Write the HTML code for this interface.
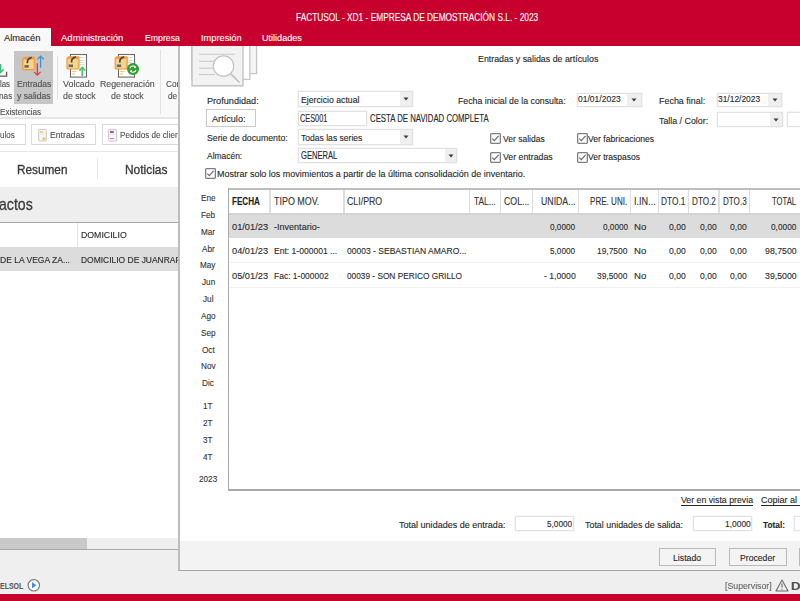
<!DOCTYPE html>
<html><head><meta charset="utf-8"><title>FACTUSOL</title><style>
html,body{margin:0;padding:0;}
body{width:800px;height:601px;position:relative;overflow:hidden;background:#fff;font-family:"Liberation Sans", sans-serif;}
.a{position:absolute;}
.t{position:absolute;white-space:nowrap;transform-origin:0 0;-webkit-text-stroke:0.12px currentColor;}

#w{position:absolute;left:0;top:0;width:800px;height:601px;overflow:hidden;filter:blur(0.3px);}
</style></head><body><div id="w">
<div class="a" style="left:0px;top:0px;width:800px;height:46.6px;background:#C8002D;"></div>
<span class="t" style="left:296.17px;top:12.75px;font-size:10px;line-height:10px;color:#FFFFFF;transform:scaleX(0.8327);">FACTUSOL - XD1 - EMPRESA DE DEMOSTRACIÓN S.L. - 2023</span>
<div class="a" style="left:0px;top:28px;width:51px;height:18px;background:#F8F8F8;"></div>
<span class="t" style="left:4.03px;top:33.00px;font-size:9.5px;line-height:9.5px;color:#262626;transform:scaleX(0.9832);">Almacén</span>
<span class="t" style="left:61.02px;top:33.00px;font-size:9.5px;line-height:9.5px;color:#FFFFFF;">Administración</span>
<span class="t" style="left:144.65px;top:33.00px;font-size:9.5px;line-height:9.5px;color:#FFFFFF;transform:scaleX(0.9180);">Empresa</span>
<span class="t" style="left:200.53px;top:33.00px;font-size:9.5px;line-height:9.5px;color:#FFFFFF;transform:scaleX(0.9742);">Impresión</span>
<span class="t" style="left:262.24px;top:33.00px;font-size:9.5px;line-height:9.5px;color:#FFFFFF;transform:scaleX(0.9546);">Utilidades</span>
<div class="a" style="left:0px;top:46px;width:178px;height:72px;background:#F9F9F9;"></div>
<div class="a" style="left:0px;top:116.9px;width:178px;height:1.7999999999999972px;background:#E6E6E6;"></div>
<div class="a" style="left:14px;top:51px;width:39px;height:52.5px;background:#C6C6C6;"></div>
<div class="a" style="left:56.5px;top:56px;width:1.0px;height:44px;background:#E1E1E1;"></div>
<div class="a" style="left:159.5px;top:50px;width:1.0px;height:64px;background:#E1E1E1;"></div>
<span class="t" style="left:-0.31px;top:79.75px;font-size:9px;line-height:9px;color:#505050;transform:scaleX(0.8707);">las</span>
<span class="t" style="left:-1.33px;top:91.75px;font-size:9px;line-height:9px;color:#505050;transform:scaleX(0.9133);">nas</span>
<span class="t" style="left:16.56px;top:79.75px;font-size:9px;line-height:9px;color:#505050;transform:scaleX(0.9544);">Entradas</span>
<span class="t" style="left:16.55px;top:91.75px;font-size:9px;line-height:9px;color:#505050;transform:scaleX(0.9622);">y salidas</span>
<span class="t" style="left:62.64px;top:79.75px;font-size:9px;line-height:9px;color:#505050;transform:scaleX(0.9901);">Volcado</span>
<span class="t" style="left:62.65px;top:91.75px;font-size:9px;line-height:9px;color:#505050;transform:scaleX(0.9753);">de stock</span>
<span class="t" style="left:99.65px;top:79.75px;font-size:9px;line-height:9px;color:#505050;transform:scaleX(0.9760);">Regeneración</span>
<span class="t" style="left:110.65px;top:91.75px;font-size:9px;line-height:9px;color:#505050;transform:scaleX(0.9753);">de stock</span>
<span class="t" style="left:165.67px;top:79.75px;font-size:9px;line-height:9px;color:#505050;transform:scaleX(0.9200);">Configuración</span>
<span class="t" style="left:167.67px;top:91.75px;font-size:9px;line-height:9px;color:#505050;transform:scaleX(0.9200);">de</span>
<span class="t" style="left:-0.33px;top:107.75px;font-size:9px;line-height:9px;color:#505050;transform:scaleX(0.9038);">Existencias</span>
<div class="a" style="left:0px;top:118.7px;width:178px;height:32.3px;background:#FFFFFF;"></div>
<div class="a" style="left:0px;top:150.5px;width:178px;height:1.0px;background:#E6E6E6;"></div>
<div class="a" style="left:-2px;top:124px;width:28px;height:21px;background:#FFFFFF;border:1px solid #DADADA;box-sizing:border-box;"></div>
<div class="a" style="left:31px;top:124px;width:65px;height:21px;background:#FFFFFF;border:1px solid #DADADA;box-sizing:border-box;"></div>
<div class="a" style="left:102px;top:124px;width:98px;height:21px;background:#FFFFFF;border:1px solid #DADADA;box-sizing:border-box;"></div>
<span class="t" style="left:-0.32px;top:130.75px;font-size:9px;line-height:9px;color:#505050;transform:scaleX(0.8863);">ulos</span>
<span class="t" style="left:49.65px;top:130.75px;font-size:9px;line-height:9px;color:#505050;transform:scaleX(0.9629);">Entradas</span>
<span class="t" style="left:120.28px;top:130.75px;font-size:9px;line-height:9px;color:#505050;transform:scaleX(0.9000);">Pedidos de clientes</span>
<div class="a" style="left:0px;top:151.5px;width:178px;height:35.0px;background:#FFFFFF;"></div>
<div class="a" style="left:96.5px;top:157.5px;width:1.0px;height:21.5px;background:#E6E6E6;"></div>
<span class="t" style="left:17.03px;top:163.25px;font-size:13px;line-height:13px;color:#3A3A3A;transform:scaleX(0.9066);-webkit-text-stroke:0.35px #3A3A3A;">Resumen</span>
<span class="t" style="left:124.52px;top:163.25px;font-size:13px;line-height:13px;color:#3A3A3A;transform:scaleX(0.9179);-webkit-text-stroke:0.35px #3A3A3A;">Noticias</span>
<div class="a" style="left:0px;top:186.5px;width:178px;height:35.5px;background:#EEEEEE;"></div>
<span class="t" style="left:-0.56px;top:196.25px;font-size:17px;line-height:17px;color:#3A3A3A;transform:scaleX(0.8299);-webkit-text-stroke:0.3px #3A3A3A;">actos</span>
<div class="a" style="left:0px;top:221.5px;width:178px;height:1.0px;background:#A8A8A8;"></div>
<div class="a" style="left:0px;top:222.5px;width:178px;height:24.0px;background:#FFFFFF;"></div>
<div class="a" style="left:77px;top:222.5px;width:1px;height:24.0px;background:#E3E3E3;"></div>
<span class="t" style="left:80.65px;top:230.75px;font-size:9px;line-height:9px;color:#2A2A2A;transform:scaleX(0.9720);">DOMICILIO</span>
<div class="a" style="left:0px;top:246.5px;width:178px;height:24.0px;background:#DCDCDC;"></div>
<span class="t" style="left:-0.34px;top:255.75px;font-size:9px;line-height:9px;color:#2A2A2A;transform:scaleX(0.9453);">DE LA VEGA ZA...</span>
<span class="t" style="left:80.66px;top:255.75px;font-size:9px;line-height:9px;color:#2A2A2A;transform:scaleX(0.9400);">DOMICILIO DE JUANRAFAEL</span>
<div class="a" style="left:0px;top:270.5px;width:178px;height:267.0px;background:#FFFFFF;"></div>
<div class="a" style="left:0px;top:537.5px;width:87px;height:11.100000000000023px;background:#C9C9C9;"></div>
<div class="a" style="left:87px;top:537.5px;width:91px;height:11.100000000000023px;background:#EEEEEE;"></div>
<div class="a" style="left:0px;top:548.6px;width:178px;height:1.3999999999999773px;background:#A8A8A8;"></div>
<div class="a" style="left:0px;top:550px;width:178px;height:44px;background:#EFEFEF;"></div>
<span class="t" style="left:-0.28px;top:581.75px;font-size:9px;line-height:9px;color:#5A5A5A;font-weight:700;transform:scaleX(0.7749);">ELSOL</span>
<svg class="a" style="left:0;top:50px" width="178" height="30" viewBox="0 50 178 30">
<path d="M0.3 64 V71.8" stroke="#3CBB6A" stroke-width="1.8"/>
<path d="M-3 69.2 L0.3 72.6 L3.7 69.2" fill="none" stroke="#3CBB6A" stroke-width="1.5"/>
<path d="M-1 76.1 H6.6 V71.8" fill="none" stroke="#5A5A5A" stroke-width="1.3"/>
<g transform="translate(22.2,56.8)"><path d="M0.6 2.2 L2.2 0.6 H12 L12.6 1.4 V12.1 L11.6 12.8 H1.2 L0.6 12 Z" fill="#F7D58E" stroke="#EE9A3C" stroke-width="1.2"/><path d="M0.8 2.6 H11.6 V12.4" fill="none" stroke="#F2B45A" stroke-width="0.9"/><rect x="0.8" y="0.8" width="11" height="1.8" fill="#F0A048"/><path d="M9.5 0.6 Q7 1.2 5.6 3.2 L5 6.3" fill="none" stroke="#3F4650" stroke-width="1.7"/><rect x="2.2" y="8.3" width="4.4" height="2.6" fill="#6E6A58"/></g>
<path d="M40.6 56.3 V67.8" stroke="#3F91D6" stroke-width="1.3"/>
<path d="M37.4 59.4 L40.6 56.2 L43.8 59.4" fill="none" stroke="#3F91D6" stroke-width="1.3"/>
<path d="M37.3 63.2 V75" stroke="#E1344A" stroke-width="1.3"/>
<path d="M34 71.9 L37.3 75.2 L40.6 71.9" fill="none" stroke="#E1344A" stroke-width="1.3"/>
<rect x="70.5" y="54.5" width="16" height="22.6" fill="#FFFFFF" stroke="#6A6A6A" stroke-width="1.1"/>
<g stroke="#D0D0D0" stroke-width="0.9"><line x1="79" y1="57.6" x2="84.5" y2="57.6"/><line x1="79" y1="60.4" x2="84.5" y2="60.4"/><line x1="79" y1="62.6" x2="84.5" y2="62.6"/><line x1="79" y1="64.6" x2="84.5" y2="64.6"/></g>
<g stroke="#F4B860" stroke-width="0.9"><line x1="72" y1="71.6" x2="76.5" y2="71.6"/><line x1="72" y1="74" x2="75" y2="74"/></g>
<g transform="translate(66.4,56.2)"><path d="M0.6 2.2 L2.2 0.6 H12 L12.6 1.4 V12.1 L11.6 12.8 H1.2 L0.6 12 Z" fill="#F7D58E" stroke="#EE9A3C" stroke-width="1.2"/><path d="M0.8 2.6 H11.6 V12.4" fill="none" stroke="#F2B45A" stroke-width="0.9"/><rect x="0.8" y="0.8" width="11" height="1.8" fill="#F0A048"/><path d="M9.5 0.6 Q7 1.2 5.6 3.2 L5 6.3" fill="none" stroke="#3F4650" stroke-width="1.7"/><rect x="2.2" y="8.3" width="4.4" height="2.6" fill="#6E6A58"/></g>
<path d="M82.3 67.6 V76" stroke="#4CC274" stroke-width="1.8"/>
<path d="M79.4 70.6 L82.3 67.5 L85.2 70.6" fill="none" stroke="#4CC274" stroke-width="1.7"/>
<rect x="118.5" y="54.5" width="16" height="22.6" fill="#FFFFFF" stroke="#6A6A6A" stroke-width="1.1"/>
<g stroke="#D0D0D0" stroke-width="0.9"><line x1="127" y1="57.6" x2="132.5" y2="57.6"/><line x1="127" y1="60.4" x2="132.5" y2="60.4"/><line x1="127" y1="62.6" x2="132" y2="62.6"/></g>
<g stroke="#F4B860" stroke-width="0.9"><line x1="120" y1="71.6" x2="124.5" y2="71.6"/><line x1="120" y1="74" x2="123" y2="74"/></g>
<g transform="translate(114.6,56.2)"><path d="M0.6 2.2 L2.2 0.6 H12 L12.6 1.4 V12.1 L11.6 12.8 H1.2 L0.6 12 Z" fill="#F7D58E" stroke="#EE9A3C" stroke-width="1.2"/><path d="M0.8 2.6 H11.6 V12.4" fill="none" stroke="#F2B45A" stroke-width="0.9"/><rect x="0.8" y="0.8" width="11" height="1.8" fill="#F0A048"/><path d="M9.5 0.6 Q7 1.2 5.6 3.2 L5 6.3" fill="none" stroke="#3F4650" stroke-width="1.7"/><rect x="2.2" y="8.3" width="4.4" height="2.6" fill="#6E6A58"/></g>
<circle cx="133" cy="69.1" r="6" fill="#2FA032"/>
<path d="M130 68.2 A3.2 3.2 0 0 1 135.6 67.2 M136 70 A3.2 3.2 0 0 1 130.4 71" fill="none" stroke="#FFFFFF" stroke-width="1.2"/>
<path d="M134.3 66.2 L136.2 67.8 L133.9 68.3 Z M131.7 72 L129.8 70.4 L132.1 69.9 Z" fill="#FFFFFF"/>
</svg>
<svg class="a" style="left:36px;top:127px" width="84" height="16" viewBox="36 127 84 16">
<rect x="38.7" y="129.4" width="7.6" height="11.6" rx="0.6" fill="#F6F6F6" stroke="#C9C9C9" stroke-width="1"/>
<rect x="40" y="131" width="2.8" height="1.8" fill="#F8C868"/>
<line x1="40" y1="134.2" x2="45" y2="134.2" stroke="#E6E6E6" stroke-width="0.8"/>
<rect x="42.6" y="137.6" width="2.6" height="2.4" fill="#F6C24E"/>
<rect x="108.6" y="129.3" width="8" height="11.8" rx="0.6" fill="#F6F6F6" stroke="#C9C9C9" stroke-width="1"/>
<rect x="110" y="131" width="3.8" height="2" fill="#C242B0"/>
<rect x="114" y="131" width="1.8" height="2" fill="#FFFFFF"/>
<line x1="110" y1="134.6" x2="115.5" y2="134.6" stroke="#E2E2E2" stroke-width="0.8"/>
<line x1="110" y1="138.6" x2="113.8" y2="138.6" stroke="#D070C8" stroke-width="1"/>
</svg>
<svg class="a" style="left:26px;top:578px" width="16" height="15" viewBox="26 578 16 15"><circle cx="33.8" cy="585.3" r="5.7" fill="#FFFFFF" stroke="#7A7A7A" stroke-width="1.2"/><path d="M32 582.3 L36.6 585.3 L32 588.3 Z" fill="#3C8FD8"/></svg>
<div class="a" style="left:178px;top:571px;width:622px;height:23px;background:#EFEFEF;"></div>
<div class="a" style="left:0px;top:593.7px;width:800px;height:7.2999999999999545px;background:#C8002D;"></div>
<div class="a" style="left:178px;top:46px;width:1.6999999999999886px;height:525px;background:#BDBDBD;"></div>
<div class="a" style="left:179.7px;top:46px;width:620.3px;height:495px;background:#FFFFFF;"></div>
<div class="a" style="left:180px;top:541px;width:620px;height:29.299999999999955px;background:#F3F3F3;"></div>
<div class="a" style="left:178px;top:570.3px;width:622px;height:1.0px;background:#A4A4A4;"></div>
<span class="t" style="left:477.65px;top:54.00px;font-size:9.5px;line-height:9.5px;color:#262626;transform:scaleX(0.9299);">Entradas y salidas de artículos</span>
<span class="t" style="left:206.64px;top:96.00px;font-size:9.5px;line-height:9.5px;color:#262626;transform:scaleX(0.9602);">Profundidad:</span>
<span class="t" style="left:206.65px;top:133.00px;font-size:9.5px;line-height:9.5px;color:#262626;transform:scaleX(0.9205);">Serie de documento:</span>
<span class="t" style="left:206.66px;top:151.00px;font-size:9.5px;line-height:9.5px;color:#262626;transform:scaleX(0.8880);">Almacén:</span>
<span class="t" style="left:217.14px;top:169.00px;font-size:9.5px;line-height:9.5px;color:#262626;transform:scaleX(0.9445);">Mostrar solo los movimientos a partir de la última consolidación de inventario.</span>
<span class="t" style="left:457.55px;top:96.00px;font-size:9.5px;line-height:9.5px;color:#262626;transform:scaleX(0.9219);">Fecha inicial de la consulta:</span>
<span class="t" style="left:658.64px;top:96.00px;font-size:9.5px;line-height:9.5px;color:#262626;transform:scaleX(0.9408);">Fecha final:</span>
<span class="t" style="left:658.65px;top:116.00px;font-size:9.5px;line-height:9.5px;color:#262626;transform:scaleX(0.9298);">Talla / Color:</span>
<span class="t" style="left:370.29px;top:113.75px;font-size:10px;line-height:10px;color:#262626;transform:scaleX(0.7797);">CESTA DE NAVIDAD COMPLETA</span>
<span class="t" style="left:502.66px;top:134.00px;font-size:9.5px;line-height:9.5px;color:#262626;transform:scaleX(0.8967);">Ver salidas</span>
<span class="t" style="left:588.26px;top:134.00px;font-size:9.5px;line-height:9.5px;color:#262626;transform:scaleX(0.9069);">Ver fabricaciones</span>
<span class="t" style="left:502.65px;top:152.00px;font-size:9.5px;line-height:9.5px;color:#262626;transform:scaleX(0.9225);">Ver entradas</span>
<span class="t" style="left:588.26px;top:152.00px;font-size:9.5px;line-height:9.5px;color:#262626;transform:scaleX(0.8965);">Ver traspasos</span>
<svg class="a" style="left:185px;top:46px" width="80" height="48" viewBox="185 46 80 48">
<path d="M192 40 V73.7 H256.6 V40" fill="#F5F5F5" stroke="#C6C6C6" stroke-width="1.3"/>
<path d="M192 40 V79.3 H249.8 V40" fill="#FFFFFF" stroke="#C6C6C6" stroke-width="1.3"/>
<path d="M192 40 V85.8 H243 V40" fill="#F2F2F2" stroke="#C2C2C2" stroke-width="1.4"/>
<g stroke="#CACACA" stroke-width="1.1">
<line x1="199" y1="54.3" x2="235" y2="54.3"/>
<line x1="199" y1="61.3" x2="214" y2="61.3"/>
<line x1="199" y1="68.2" x2="213" y2="68.2"/>
<line x1="199" y1="74.5" x2="215" y2="74.5"/>
</g>
<circle cx="223.5" cy="66" r="10.2" fill="#FFFFFF" stroke="#C4C4C4" stroke-width="1.2"/>
<line x1="231" y1="74" x2="239.5" y2="82.5" stroke="#B8B8B8" stroke-width="1.4"/>
</svg>
<div class="a" style="left:298px;top:91.3px;width:114.60000000000002px;height:15.700000000000003px;background:#FFFFFF;border:1px solid #E2E2E2;box-sizing:border-box;box-shadow:0 0 0 0.5px #EFEFEF;"></div>
<div class="a" style="left:399.5px;top:92.3px;width:12.100000000000023px;height:13.700000000000003px;background:#EFEFEF;"></div>
<svg class="a" style="left:403.1px;top:97.2px" width="6" height="4" viewBox="0 0 6 4"><path d="M0.5 0.5 H5.5 L3 3.5Z" fill="#3A3A3A"/></svg>
<span class="t" style="left:300.95px;top:95.00px;font-size:9.5px;line-height:9.5px;color:#262626;transform:scaleX(0.9140);">Ejercicio actual</span>
<div class="a" style="left:298px;top:111px;width:68.5px;height:14.5px;background:#FFFFFF;border:1px solid #E2E2E2;box-sizing:border-box;box-shadow:0 0 0 0.5px #EFEFEF;"></div>
<span class="t" style="left:300.01px;top:113.75px;font-size:10px;line-height:10px;color:#262626;transform:scaleX(0.7325);">CES001</span>
<div class="a" style="left:298px;top:129.2px;width:114.60000000000002px;height:15.800000000000011px;background:#FFFFFF;border:1px solid #E2E2E2;box-sizing:border-box;box-shadow:0 0 0 0.5px #EFEFEF;"></div>
<div class="a" style="left:399.5px;top:130.2px;width:12.100000000000023px;height:13.800000000000011px;background:#EFEFEF;"></div>
<svg class="a" style="left:403.1px;top:135.1px" width="6" height="4" viewBox="0 0 6 4"><path d="M0.5 0.5 H5.5 L3 3.5Z" fill="#3A3A3A"/></svg>
<span class="t" style="left:300.96px;top:133.00px;font-size:9.5px;line-height:9.5px;color:#262626;transform:scaleX(0.9011);">Todas las series</span>
<div class="a" style="left:298px;top:147.6px;width:159px;height:15.900000000000006px;background:#FFFFFF;border:1px solid #E2E2E2;box-sizing:border-box;box-shadow:0 0 0 0.5px #EFEFEF;"></div>
<div class="a" style="left:445px;top:148.6px;width:11px;height:13.900000000000006px;background:#EFEFEF;"></div>
<svg class="a" style="left:448.0px;top:153.6px" width="6" height="4" viewBox="0 0 6 4"><path d="M0.5 0.5 H5.5 L3 3.5Z" fill="#3A3A3A"/></svg>
<span class="t" style="left:301.00px;top:150.75px;font-size:10px;line-height:10px;color:#262626;transform:scaleX(0.7596);">GENERAL</span>
<div class="a" style="left:206.4px;top:109.2px;width:49.19999999999999px;height:17.39999999999999px;background:#FFFFFF;border:1px solid #C9C9C9;box-sizing:border-box;"></div>
<span class="t" style="left:212.43px;top:114.00px;font-size:9.5px;line-height:9.5px;color:#262626;transform:scaleX(0.9619);">Artículo:</span>
<svg class="a" style="left:205px;top:168.3px" width="11" height="11" viewBox="0 0 11 11"><rect x="0.65" y="0.65" width="9.7" height="9.7" rx="0.8" fill="#FFFFFF" stroke="#7F7F7F" stroke-width="1.3"/><path d="M2.3 5.6 L4.3 7.6 L8.6 2.8" fill="none" stroke="#6A6A6A" stroke-width="1.2"/></svg>
<svg class="a" style="left:490.3px;top:133.3px" width="11" height="11" viewBox="0 0 11 11"><rect x="0.65" y="0.65" width="9.7" height="9.7" rx="0.8" fill="#FFFFFF" stroke="#7F7F7F" stroke-width="1.3"/><path d="M2.3 5.6 L4.3 7.6 L8.6 2.8" fill="none" stroke="#6A6A6A" stroke-width="1.2"/></svg>
<svg class="a" style="left:490.3px;top:152px" width="11" height="11" viewBox="0 0 11 11"><rect x="0.65" y="0.65" width="9.7" height="9.7" rx="0.8" fill="#FFFFFF" stroke="#7F7F7F" stroke-width="1.3"/><path d="M2.3 5.6 L4.3 7.6 L8.6 2.8" fill="none" stroke="#6A6A6A" stroke-width="1.2"/></svg>
<svg class="a" style="left:576.5px;top:133.3px" width="11" height="11" viewBox="0 0 11 11"><rect x="0.65" y="0.65" width="9.7" height="9.7" rx="0.8" fill="#FFFFFF" stroke="#7F7F7F" stroke-width="1.3"/><path d="M2.3 5.6 L4.3 7.6 L8.6 2.8" fill="none" stroke="#6A6A6A" stroke-width="1.2"/></svg>
<svg class="a" style="left:576.5px;top:152px" width="11" height="11" viewBox="0 0 11 11"><rect x="0.65" y="0.65" width="9.7" height="9.7" rx="0.8" fill="#FFFFFF" stroke="#7F7F7F" stroke-width="1.3"/><path d="M2.3 5.6 L4.3 7.6 L8.6 2.8" fill="none" stroke="#6A6A6A" stroke-width="1.2"/></svg>
<div class="a" style="left:576.5px;top:92.5px;width:65.0px;height:14.799999999999997px;background:#FFFFFF;border:1px solid #E2E2E2;box-sizing:border-box;box-shadow:0 0 0 0.5px #EFEFEF;"></div>
<div class="a" style="left:627px;top:93.5px;width:13.5px;height:12.799999999999997px;background:#EFEFEF;"></div>
<svg class="a" style="left:631.2px;top:97.9px" width="6" height="4" viewBox="0 0 6 4"><path d="M0.5 0.5 H5.5 L3 3.5Z" fill="#3A3A3A"/></svg>
<span class="t" style="left:577.66px;top:94.00px;font-size:9.5px;line-height:9.5px;color:#262626;transform:scaleX(0.8977);">01/01/2023</span>
<div class="a" style="left:716.6px;top:92.5px;width:65.39999999999998px;height:14.799999999999997px;background:#FFFFFF;border:1px solid #E2E2E2;box-sizing:border-box;box-shadow:0 0 0 0.5px #EFEFEF;"></div>
<div class="a" style="left:768px;top:93.5px;width:13px;height:12.799999999999997px;background:#EFEFEF;"></div>
<svg class="a" style="left:772.0px;top:97.9px" width="6" height="4" viewBox="0 0 6 4"><path d="M0.5 0.5 H5.5 L3 3.5Z" fill="#3A3A3A"/></svg>
<span class="t" style="left:718.16px;top:94.00px;font-size:9.5px;line-height:9.5px;color:#262626;transform:scaleX(0.8870);">31/12/2023</span>
<div class="a" style="left:716.6px;top:111.7px;width:66.0px;height:15.799999999999997px;background:#FFFFFF;border:1px solid #E2E2E2;box-sizing:border-box;box-shadow:0 0 0 0.5px #EFEFEF;"></div>
<div class="a" style="left:769.7px;top:112.7px;width:11.899999999999977px;height:13.799999999999997px;background:#EFEFEF;"></div>
<svg class="a" style="left:773.2px;top:117.6px" width="6" height="4" viewBox="0 0 6 4"><path d="M0.5 0.5 H5.5 L3 3.5Z" fill="#3A3A3A"/></svg>
<div class="a" style="left:787px;top:111.7px;width:43px;height:15.799999999999997px;background:#FFFFFF;border:1px solid #E2E2E2;box-sizing:border-box;box-shadow:0 0 0 0.5px #EFEFEF;"></div>
<div class="a" style="left:228.3px;top:188.2px;width:601.7px;height:302.40000000000003px;background:#FFFFFF;"></div>
<div class="a" style="left:228.3px;top:188.2px;width:601.7px;height:1.6000000000000227px;background:#BDBDBD;"></div>
<div class="a" style="left:228.3px;top:188.2px;width:1.1999999999999886px;height:302.40000000000003px;background:#A9A9A9;"></div>
<div class="a" style="left:228.3px;top:489.3px;width:601.7px;height:1.3000000000000114px;background:#A9A9A9;"></div>
<div class="a" style="left:229.3px;top:213px;width:600.7px;height:25px;background:#DCDCDC;"></div>
<div class="a" style="left:229.3px;top:213px;width:600.7px;height:1.5px;background:#D3D3D3;"></div>
<div class="a" style="left:229.6px;top:262.2px;width:600.4px;height:1.0px;background:#EFEFEF;"></div>
<div class="a" style="left:229.6px;top:287px;width:600.4px;height:1px;background:#EFEFEF;"></div>
<div class="a" style="left:269.4px;top:189.8px;width:1.400000000000034px;height:23.19999999999999px;background:#DEDEDE;"></div>
<div class="a" style="left:343.2px;top:189.8px;width:1.400000000000034px;height:23.19999999999999px;background:#DEDEDE;"></div>
<div class="a" style="left:468.9px;top:189.8px;width:1.400000000000034px;height:23.19999999999999px;background:#DEDEDE;"></div>
<div class="a" style="left:499.9px;top:189.8px;width:1.400000000000034px;height:23.19999999999999px;background:#DEDEDE;"></div>
<div class="a" style="left:531.9px;top:189.8px;width:1.3999999999999773px;height:23.19999999999999px;background:#DEDEDE;"></div>
<div class="a" style="left:578.0px;top:189.8px;width:1.3999999999999773px;height:23.19999999999999px;background:#DEDEDE;"></div>
<div class="a" style="left:629.6px;top:189.8px;width:1.3999999999999773px;height:23.19999999999999px;background:#DEDEDE;"></div>
<div class="a" style="left:657.6999999999999px;top:189.8px;width:1.3999999999999773px;height:23.19999999999999px;background:#DEDEDE;"></div>
<div class="a" style="left:688.0px;top:189.8px;width:1.3999999999999773px;height:23.19999999999999px;background:#DEDEDE;"></div>
<div class="a" style="left:718.4px;top:189.8px;width:1.3999999999999773px;height:23.19999999999999px;background:#DEDEDE;"></div>
<div class="a" style="left:748.8px;top:189.8px;width:1.3999999999999773px;height:23.19999999999999px;background:#DEDEDE;"></div>
<span class="t" style="left:231.68px;top:196.75px;font-size:10px;line-height:10px;color:#1E1E1E;font-weight:700;transform:scaleX(0.8112);">FECHA</span>
<span class="t" style="left:273.64px;top:196.75px;font-size:10px;line-height:10px;color:#333333;transform:scaleX(0.8926);">TIPO MOV.</span>
<span class="t" style="left:346.85px;top:196.75px;font-size:10px;line-height:10px;color:#333333;transform:scaleX(0.8798);">CLI/PRO</span>
<span class="t" style="left:473.67px;top:196.75px;font-size:10px;line-height:10px;color:#333333;transform:scaleX(0.8354);">TAL...</span>
<span class="t" style="left:503.65px;top:196.75px;font-size:10px;line-height:10px;color:#333333;transform:scaleX(0.8753);">COL...</span>
<span class="t" style="left:540.65px;top:196.75px;font-size:10px;line-height:10px;color:#333333;transform:scaleX(0.8744);">UNIDA...</span>
<span class="t" style="left:589.68px;top:196.75px;font-size:10px;line-height:10px;color:#333333;transform:scaleX(0.8075);">PRE. UNI.</span>
<span class="t" style="left:633.64px;top:196.75px;font-size:10px;line-height:10px;color:#333333;transform:scaleX(0.9088);">I.IN...</span>
<span class="t" style="left:661.27px;top:196.75px;font-size:10px;line-height:10px;color:#333333;transform:scaleX(0.8321);">DTO.1</span>
<span class="t" style="left:692.17px;top:196.75px;font-size:10px;line-height:10px;color:#333333;transform:scaleX(0.8146);">DTO.2</span>
<span class="t" style="left:722.68px;top:196.75px;font-size:10px;line-height:10px;color:#333333;transform:scaleX(0.8075);">DTO.3</span>
<span class="t" style="left:771.69px;top:196.75px;font-size:10px;line-height:10px;color:#333333;transform:scaleX(0.7702);">TOTAL</span>
<span class="t" style="left:231.63px;top:222.00px;font-size:9.5px;line-height:9.5px;color:#2A2A2A;transform:scaleX(0.9745);">01/01/23</span>
<span class="t" style="left:273.64px;top:222.00px;font-size:9.5px;line-height:9.5px;color:#2A2A2A;transform:scaleX(0.9513);">-Inventario-</span>
<span class="t" style="left:550.47px;top:222.00px;font-size:9.5px;line-height:9.5px;color:#2A2A2A;transform:scaleX(0.8656);">0,0000</span>
<span class="t" style="left:602.67px;top:222.00px;font-size:9.5px;line-height:9.5px;color:#2A2A2A;transform:scaleX(0.8656);">0,0000</span>
<span class="t" style="left:633.62px;top:222.00px;font-size:9.5px;line-height:9.5px;color:#2A2A2A;transform:scaleX(1.0091);">No</span>
<span class="t" style="left:669.36px;top:222.00px;font-size:9.5px;line-height:9.5px;color:#2A2A2A;transform:scaleX(0.9019);">0,00</span>
<span class="t" style="left:699.66px;top:222.00px;font-size:9.5px;line-height:9.5px;color:#2A2A2A;transform:scaleX(0.9019);">0,00</span>
<span class="t" style="left:729.86px;top:222.00px;font-size:9.5px;line-height:9.5px;color:#2A2A2A;transform:scaleX(0.9019);">0,00</span>
<span class="t" style="left:771.27px;top:222.00px;font-size:9.5px;line-height:9.5px;color:#2A2A2A;transform:scaleX(0.8727);">0,0000</span>
<span class="t" style="left:231.63px;top:246.00px;font-size:9.5px;line-height:9.5px;color:#2A2A2A;transform:scaleX(0.9745);">04/01/23</span>
<span class="t" style="left:273.66px;top:246.00px;font-size:9.5px;line-height:9.5px;color:#2A2A2A;transform:scaleX(0.8994);">Ent: 1-000001 ...</span>
<span class="t" style="left:346.86px;top:246.00px;font-size:9.5px;line-height:9.5px;color:#2A2A2A;transform:scaleX(0.8979);">00003 - SEBASTIAN AMARO...</span>
<span class="t" style="left:550.47px;top:246.00px;font-size:9.5px;line-height:9.5px;color:#2A2A2A;transform:scaleX(0.8656);">5,0000</span>
<span class="t" style="left:597.46px;top:246.00px;font-size:9.5px;line-height:9.5px;color:#2A2A2A;transform:scaleX(0.8844);">19,7500</span>
<span class="t" style="left:633.62px;top:246.00px;font-size:9.5px;line-height:9.5px;color:#2A2A2A;transform:scaleX(1.0091);">No</span>
<span class="t" style="left:669.36px;top:246.00px;font-size:9.5px;line-height:9.5px;color:#2A2A2A;transform:scaleX(0.9019);">0,00</span>
<span class="t" style="left:699.66px;top:246.00px;font-size:9.5px;line-height:9.5px;color:#2A2A2A;transform:scaleX(0.9019);">0,00</span>
<span class="t" style="left:729.86px;top:246.00px;font-size:9.5px;line-height:9.5px;color:#2A2A2A;transform:scaleX(0.9019);">0,00</span>
<span class="t" style="left:764.95px;top:246.00px;font-size:9.5px;line-height:9.5px;color:#2A2A2A;transform:scaleX(0.9231);">98,7500</span>
<span class="t" style="left:231.63px;top:271.00px;font-size:9.5px;line-height:9.5px;color:#2A2A2A;transform:scaleX(0.9745);">05/01/23</span>
<span class="t" style="left:273.66px;top:271.00px;font-size:9.5px;line-height:9.5px;color:#2A2A2A;transform:scaleX(0.8925);">Fac: 1-000002</span>
<span class="t" style="left:346.87px;top:271.00px;font-size:9.5px;line-height:9.5px;color:#2A2A2A;transform:scaleX(0.8717);">00039 - SON PERICO GRILLO</span>
<span class="t" style="left:543.95px;top:271.00px;font-size:9.5px;line-height:9.5px;color:#2A2A2A;transform:scaleX(0.9087);">- 1,0000</span>
<span class="t" style="left:597.46px;top:271.00px;font-size:9.5px;line-height:9.5px;color:#2A2A2A;transform:scaleX(0.8844);">39,5000</span>
<span class="t" style="left:633.62px;top:271.00px;font-size:9.5px;line-height:9.5px;color:#2A2A2A;transform:scaleX(1.0091);">No</span>
<span class="t" style="left:669.36px;top:271.00px;font-size:9.5px;line-height:9.5px;color:#2A2A2A;transform:scaleX(0.9019);">0,00</span>
<span class="t" style="left:699.66px;top:271.00px;font-size:9.5px;line-height:9.5px;color:#2A2A2A;transform:scaleX(0.9019);">0,00</span>
<span class="t" style="left:729.86px;top:271.00px;font-size:9.5px;line-height:9.5px;color:#2A2A2A;transform:scaleX(0.9019);">0,00</span>
<span class="t" style="left:764.95px;top:271.00px;font-size:9.5px;line-height:9.5px;color:#2A2A2A;transform:scaleX(0.9231);">39,5000</span>
<span class="t" style="left:200.93px;top:193.00px;font-size:9.5px;line-height:9.5px;color:#333333;transform:scaleX(0.8600);">Ene</span>
<span class="t" style="left:201.16px;top:210.00px;font-size:9.5px;line-height:9.5px;color:#333333;transform:scaleX(0.8600);">Feb</span>
<span class="t" style="left:201.16px;top:227.00px;font-size:9.5px;line-height:9.5px;color:#333333;transform:scaleX(0.8600);">Mar</span>
<span class="t" style="left:201.84px;top:244.00px;font-size:9.5px;line-height:9.5px;color:#333333;transform:scaleX(0.8600);">Abr</span>
<span class="t" style="left:200.48px;top:260.00px;font-size:9.5px;line-height:9.5px;color:#333333;transform:scaleX(0.8600);">May</span>
<span class="t" style="left:201.61px;top:277.00px;font-size:9.5px;line-height:9.5px;color:#333333;transform:scaleX(0.8600);">Jun</span>
<span class="t" style="left:202.97px;top:294.00px;font-size:9.5px;line-height:9.5px;color:#333333;transform:scaleX(0.8600);">Jul</span>
<span class="t" style="left:200.93px;top:311.00px;font-size:9.5px;line-height:9.5px;color:#333333;transform:scaleX(0.8600);">Ago</span>
<span class="t" style="left:200.93px;top:328.00px;font-size:9.5px;line-height:9.5px;color:#333333;transform:scaleX(0.8600);">Sep</span>
<span class="t" style="left:201.84px;top:345.00px;font-size:9.5px;line-height:9.5px;color:#333333;transform:scaleX(0.8600);">Oct</span>
<span class="t" style="left:200.93px;top:361.00px;font-size:9.5px;line-height:9.5px;color:#333333;transform:scaleX(0.8600);">Nov</span>
<span class="t" style="left:202.29px;top:378.00px;font-size:9.5px;line-height:9.5px;color:#333333;transform:scaleX(0.8600);">Dic</span>
<span class="t" style="left:203.43px;top:401.00px;font-size:9.5px;line-height:9.5px;color:#333333;transform:scaleX(0.8600);">1T</span>
<span class="t" style="left:203.43px;top:418.00px;font-size:9.5px;line-height:9.5px;color:#333333;transform:scaleX(0.8600);">2T</span>
<span class="t" style="left:203.43px;top:435.00px;font-size:9.5px;line-height:9.5px;color:#333333;transform:scaleX(0.8600);">3T</span>
<span class="t" style="left:203.43px;top:452.00px;font-size:9.5px;line-height:9.5px;color:#333333;transform:scaleX(0.8600);">4T</span>
<span class="t" style="left:199.11px;top:474.00px;font-size:9.5px;line-height:9.5px;color:#333333;transform:scaleX(0.8600);">2023</span>
<span class="t" style="left:681.25px;top:495.00px;font-size:9.5px;line-height:9.5px;color:#262626;transform:scaleX(0.9212);text-decoration:underline;text-underline-offset:2px;">Ver en vista previa</span>
<span class="t" style="left:761.44px;top:495.00px;font-size:9.5px;line-height:9.5px;color:#262626;transform:scaleX(0.9500);text-decoration:underline;text-underline-offset:2px;">Copiar al portapapeles</span>
<span class="t" style="left:398.94px;top:520.00px;font-size:9.5px;line-height:9.5px;color:#262626;transform:scaleX(0.9503);">Total unidades de entrada:</span>
<div class="a" style="left:514.8px;top:516px;width:59.10000000000002px;height:14.600000000000023px;background:#FFFFFF;border:1px solid #E2E2E2;box-sizing:border-box;box-shadow:0 0 0 0.5px #EFEFEF;"></div>
<span class="t" style="left:547.47px;top:519.00px;font-size:9.5px;line-height:9.5px;color:#262626;transform:scaleX(0.8656);">5,0000</span>
<span class="t" style="left:585.44px;top:520.00px;font-size:9.5px;line-height:9.5px;color:#262626;transform:scaleX(0.9363);">Total unidades de salida:</span>
<div class="a" style="left:692.8px;top:516px;width:58.90000000000009px;height:14.600000000000023px;background:#FFFFFF;border:1px solid #E2E2E2;box-sizing:border-box;box-shadow:0 0 0 0.5px #EFEFEF;"></div>
<span class="t" style="left:724.96px;top:519.00px;font-size:9.5px;line-height:9.5px;color:#262626;transform:scaleX(0.8868);">1,0000</span>
<span class="t" style="left:762.57px;top:520.00px;font-size:9.5px;line-height:9.5px;color:#262626;font-weight:700;transform:scaleX(0.8731);">Total:</span>
<div class="a" style="left:793.7px;top:516px;width:36.299999999999955px;height:14.600000000000023px;background:#FFFFFF;border:1px solid #E2E2E2;box-sizing:border-box;box-shadow:0 0 0 0.5px #EFEFEF;"></div>
<div class="a" style="left:659px;top:548px;width:57.39999999999998px;height:18.200000000000045px;background:#F4F4F4;border:1px solid #B9B9B9;box-sizing:border-box;"></div>
<span class="t" style="left:672.65px;top:553.00px;font-size:9.5px;line-height:9.5px;color:#262626;transform:scaleX(0.9170);">Listado</span>
<div class="a" style="left:729px;top:548px;width:58px;height:18.200000000000045px;background:#F4F4F4;border:1px solid #B9B9B9;box-sizing:border-box;"></div>
<span class="t" style="left:739.65px;top:553.00px;font-size:9.5px;line-height:9.5px;color:#262626;transform:scaleX(0.9100);">Proceder</span>
<div class="a" style="left:799px;top:548px;width:51px;height:18.200000000000045px;background:#F4F4F4;border:1px solid #B9B9B9;box-sizing:border-box;"></div>
<span class="t" style="left:724.65px;top:581.00px;font-size:9.5px;line-height:9.5px;color:#666666;transform:scaleX(0.9213);">[Supervisor]</span>
<svg class="a" style="left:775px;top:579px" width="14" height="13" viewBox="0 0 14 13"><path d="M7 1 L13 12 H1 Z" fill="none" stroke="#6A6A6A" stroke-width="1.1" stroke-linejoin="round"/><path d="M7 4.5 V8.6 M7 9.8 V10.8" stroke="#6A6A6A" stroke-width="1.1"/></svg>
<span class="t" style="left:791.47px;top:581.75px;font-size:10px;line-height:10px;color:#505050;font-weight:700;transform:scaleX(1.3210);">D</span>
</div></body></html>
